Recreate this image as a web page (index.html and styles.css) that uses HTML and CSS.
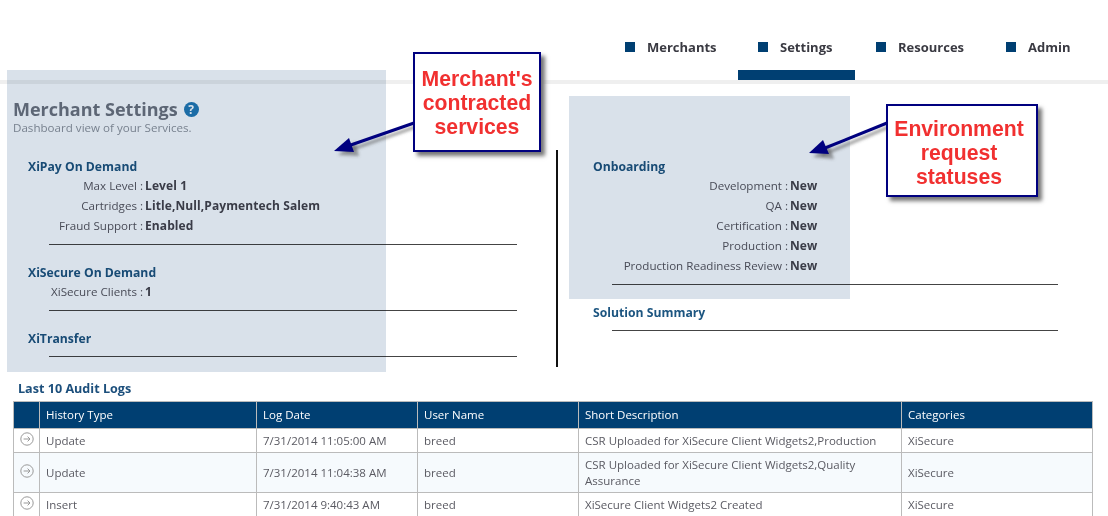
FILE: index.html
```html
<!DOCTYPE html>
<html lang="en">
<head>
<meta charset="utf-8">
<title>Merchant Settings</title>
<link rel="stylesheet" href="styles.css">
</head>
<body>
<header class="topbar">
  <nav class="nav">
    <a class="nav-item nav-merchants"><span class="nav-square"></span>Merchants</a>
    <a class="nav-item nav-settings is-active"><span class="nav-square"></span>Settings</a>
    <a class="nav-item nav-resources"><span class="nav-square"></span>Resources</a>
    <a class="nav-item nav-admin"><span class="nav-square"></span>Admin</a>
  </nav>
</header>
<main class="content">
  <div class="columns">
    <section class="col col-left">
      <h1 class="page-title">Merchant Settings <span class="help">?</span></h1>
      <p class="page-sub">Dashboard view of your Services.</p>
      <div class="service">
        <h2 class="service-title">XiPay On Demand</h2>
        <dl class="rows">
          <dt>Max Level :</dt><dd>Level 1</dd>
          <dt>Cartridges :</dt><dd>Litle,Null,Paymentech Salem</dd>
          <dt>Fraud Support :</dt><dd>Enabled</dd>
        </dl>
        <hr class="rule">
      </div>
      <div class="service">
        <h2 class="service-title">XiSecure On Demand</h2>
        <dl class="rows">
          <dt>XiSecure Clients :</dt><dd>1</dd>
        </dl>
        <hr class="rule">
      </div>
      <div class="service">
        <h2 class="service-title">XiTransfer</h2>
        <hr class="rule rule-tight">
      </div>
    </section>
    <section class="col col-right">
      <div class="service">
        <h2 class="service-title">Onboarding</h2>
        <dl class="rows rows-wide">
          <dt>Development :</dt><dd>New</dd>
          <dt>QA :</dt><dd>New</dd>
          <dt>Certification :</dt><dd>New</dd>
          <dt>Production :</dt><dd>New</dd>
          <dt>Production Readiness Review :</dt><dd>New</dd>
        </dl>
        <hr class="rule">
      </div>
      <div class="service">
        <h2 class="service-title">Solution Summary</h2>
        <hr class="rule rule-tight">
      </div>
    </section>
  </div>
  <h2 class="log-title">Last 10 Audit Logs</h2>
  <table class="log">
    <colgroup>
      <col class="c-icon"><col class="c-type"><col class="c-date"><col class="c-user"><col class="c-desc"><col class="c-cat">
    </colgroup>
    <thead>
      <tr><th></th><th>History Type</th><th>Log Date</th><th>User Name</th><th>Short Description</th><th>Categories</th></tr>
    </thead>
    <tbody>
      <tr>
        <td class="icon-cell"><svg class="go" viewBox="0 0 14 14"><circle cx="7" cy="7" r="6.2"/><path d="M3.6 7H10M7.6 4.6 10 7 7.6 9.4"/></svg></td>
        <td>Update</td><td>7/31/2014 11:05:00 AM</td><td>breed</td><td>CSR Uploaded for XiSecure Client Widgets2,Production</td><td>XiSecure</td>
      </tr>
      <tr class="alt">
        <td class="icon-cell"><svg class="go" viewBox="0 0 14 14"><circle cx="7" cy="7" r="6.2"/><path d="M3.6 7H10M7.6 4.6 10 7 7.6 9.4"/></svg></td>
        <td>Update</td><td>7/31/2014 11:04:38 AM</td><td>breed</td><td>CSR Uploaded for XiSecure Client Widgets2,Quality Assurance</td><td>XiSecure</td>
      </tr>
      <tr>
        <td class="icon-cell"><svg class="go" viewBox="0 0 14 14"><circle cx="7" cy="7" r="6.2"/><path d="M3.6 7H10M7.6 4.6 10 7 7.6 9.4"/></svg></td>
        <td>Insert</td><td>7/31/2014 9:40:43 AM</td><td>breed</td><td>XiSecure Client Widgets2 Created</td><td>XiSecure</td>
      </tr>
    </tbody>
  </table>
</main>

<div class="shade shade-left"></div>
<div class="shade shade-right"></div>
<svg class="arrows" viewBox="0 0 1108 516">
  <defs>
    <filter id="soft" x="-20%" y="-40%" width="140%" height="180%"><feGaussianBlur stdDeviation="1.6"/></filter>
  </defs>
  <g class="arrow-shadow" filter="url(#soft)">
    <path d="M418 126 347 151"/><path class="head" d="M338 155 355 142 359 156Z"/>
    <path d="M891 126 822 155"/><path class="head" d="M813 157 829 145 834 159Z"/>
  </g>
  <path class="arrow-line" d="M414 123 345 147"/>
  <path class="arrow-head" d="M334 151 349 138 354 152Z"/>
  <path class="arrow-line" d="M887 123 820 150"/>
  <path class="arrow-head" d="M809 153 823 140 829 154Z"/>
</svg>
<div class="callout callout-left">Merchant's<br>contracted<br>services</div>
<div class="callout callout-right">Environment<br>request<br>statuses</div>
</body>
</html>
```
FILE: styles.css
```css
* { box-sizing: border-box; }
html, body { margin: 0; padding: 0; height: 516px; overflow: hidden; background: #fff; }
body { font-family: "Open Sans", "Noto Sans", sans-serif; font-size: 11.6px; color: #4a4a55; position: relative; }

.topbar { height: 84px; border-bottom: 4px solid #efefef; }
.nav { display: flex; height: 80px; padding-left: 605px; }
.nav-item { display: flex; align-items: flex-start; padding-top: 38px; font-size: 13px; font-weight: 700; color: #3a3a42; line-height: 18px; border-bottom: 10px solid transparent; }
.nav-square { width: 10px; height: 10px; background: #003f72; margin: 4px 12px 0 0; }
.nav-merchants { width: 133px; padding-left: 20px; }
.nav-settings { width: 117px; padding-left: 20px; border-bottom-color: #003f72; }
.nav-resources { width: 130px; padding-left: 21px; }
.nav-admin { padding-left: 21px; }

.content { padding: 0 15px 0 14px; }
.columns { display: flex; height: 297px; }
.col-left { width: 542px; padding-top: 14px; position: relative; }
.col-right { flex: 1; margin-top: 66px; height: 217px; border-left: 2px solid #111; padding: 8px 0 0 35px; }

.page-title { margin: 0 0 0 -1px; font-size: 18px; font-weight: 700; line-height: 22px; color: #6d7480; display: flex; align-items: center; gap: 6px; }
.help { width: 15px; height: 15px; border-radius: 50%; background: #1f7ab5; color: #fff; font-size: 12px; font-weight: 700; line-height: 15px; text-align: center; }
.page-sub { margin: 1px 0 0 -1px; font-size: 11.6px; line-height: 14px; color: #8d939c; }

.col-left .service:first-of-type { margin-top: 23px; }
.service-title { margin: 0; font-size: 12.2px; font-weight: 700; line-height: 17px; color: #1c5580; }
.col-left .service { margin-left: 14px; }
.col-right .service { margin-left: 0; }
.rows { display: grid; grid-template-columns: 115px 1fr; grid-auto-rows: 20px; margin: 1px 0 0; line-height: 20px; }
.rows dt { text-align: right; color: #55555f; white-space: nowrap; }
.rows dd { margin: 0 0 0 2px; font-size: 12px; letter-spacing: .1px; font-weight: 700; color: #44444e; white-space: nowrap; }
.rows-wide { grid-template-columns: 195px 1fr; }
.rule { margin: 8px 0 19px 21px; width: 468px; height: 1px; border: 0; background: #444; }
.col-right .rule { margin-left: 19px; width: 446px; }
.rule-tight { margin-top: 9px; }

.log-title { margin: 0 0 4px 4px; font-size: 12.6px; font-weight: 700; line-height: 16px; color: #1c4f7c; }
.log { width: 1079px; margin-left: -1px; border-collapse: collapse; table-layout: fixed; font-size: 11.5px; line-height: 16px; color: #5a5a62; }
.c-icon { width: 26px; } .c-type { width: 217px; } .c-date { width: 161px; } .c-user { width: 161px; } .c-desc { width: 323px; } .c-cat { width: 191px; }
.log th { background: #003f72; color: #fff; font-weight: 400; text-align: left; height: 27px; padding: 0 5px 0 6px; border: 1px solid #bbb; }
.log td { padding: 4px 5px 3px 6px; border: 1px solid #bbb; vertical-align: middle; }
.log .alt td { background: #f6fafd; }
.log .icon-cell { padding: 0 5px 0 6px; vertical-align: middle; }
.go { display: block; width: 14px; height: 14px; margin-bottom: 4px; fill: none; stroke: #999; stroke-width: 1; }

.shade { position: absolute; background: #d9e1ea; mix-blend-mode: multiply; pointer-events: none; }
.shade-left { left: 7px; top: 70px; width: 379px; height: 302px; }
.shade-right { left: 569px; top: 96px; width: 281px; height: 203px; }

.arrows { position: absolute; left: 0; top: 0; width: 1108px; height: 516px; pointer-events: none; }
.arrow-line { fill: none; stroke: #00007f; stroke-width: 3; }
.arrow-head { fill: #00007f; }
.arrow-shadow path { fill: none; stroke: #555; stroke-width: 3; opacity: .55; }
.arrow-shadow .head { fill: #555; stroke: none; }

.callout { position: absolute; background: #fff; border: 2px solid #00007f; box-shadow: 4px 4px 4px #777; font-family: "Liberation Sans", Arial, sans-serif; font-weight: 700; font-size: 21.2px; line-height: 24px; color: #f13030; text-align: center; display: flex; align-items: center; justify-content: center; }
.callout-left { left: 413px; top: 52px; width: 128px; height: 100px; padding-top: 2px; }
.callout-right { left: 886px; top: 104px; width: 152px; height: 93px; padding: 5px 6px 0 0; }
```
